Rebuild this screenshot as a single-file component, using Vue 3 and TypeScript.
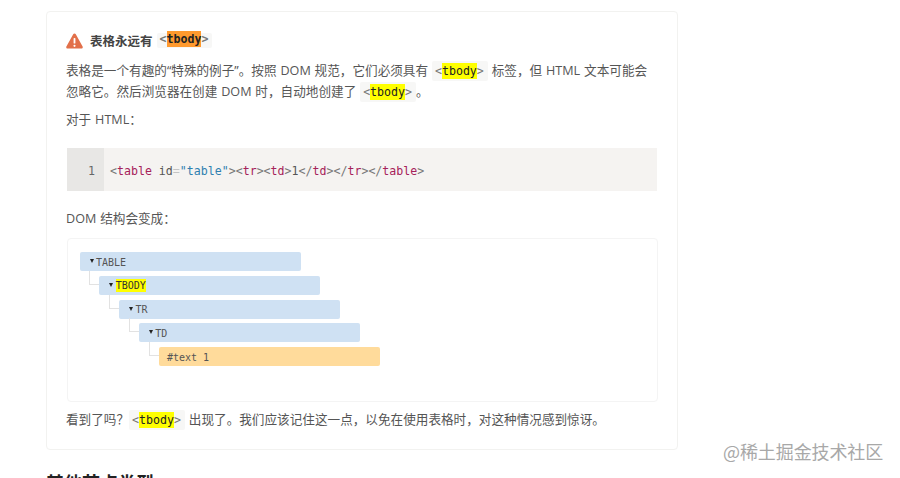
<script setup lang="ts">
interface TreeNode { label: string; depth: number; arrow: boolean; mark?: boolean; text?: boolean }
interface Token { t: string; c: string }
const nodes: TreeNode[] = [
  { label: 'TABLE', depth: 0, arrow: true },
  { label: 'TBODY', depth: 1, arrow: true, mark: true },
  { label: 'TR', depth: 2, arrow: true },
  { label: 'TD', depth: 3, arrow: true },
  { label: '#text 1', depth: 4, arrow: false, text: true },
]
const tokens: Token[] = [
  { t: '<', c: 'p' }, { t: 'table', c: 'k' }, { t: ' id', c: 'a' }, { t: '=', c: 'e' }, { t: '"table"', c: 's' },
  { t: '><', c: 'p' }, { t: 'tr', c: 'k' }, { t: '><', c: 'p' }, { t: 'td', c: 'k' }, { t: '>', c: 'p' },
  { t: '1', c: 'a' }, { t: '</', c: 'p' }, { t: 'td', c: 'k' }, { t: '></', c: 'p' }, { t: 'tr', c: 'k' },
  { t: '></', c: 'p' }, { t: 'table', c: 'k' }, { t: '>', c: 'p' },
]
</script>

<template>
  <div class="page">
    <section class="card">
      <h4 class="title">
        <svg class="warn" width="17" height="16" viewBox="0 0 17 16" aria-hidden="true">
          <path d="M8.5 0.4c.6 0 1 .3 1.3.8l6.8 12.4c.5 1-.1 2-1.2 2H1.6c-1.1 0-1.7-1-1.2-2L7.2 1.2c.3-.5.7-.8 1.3-.8z" fill="#e2704a"/>
          <rect x="7.6" y="5" width="1.8" height="5.6" rx=".7" fill="#fff"/>
          <circle cx="8.5" cy="12.8" r="1.1" fill="#fff"/>
        </svg>
        <span>表格永远有</span>
        <code class="pill head">&lt;<mark class="orange">tbody</mark>&gt;</code>
      </h4>
      <p class="para first">表格是一个有趣的“特殊的例子”。按照 DOM 规范，它们必须具有 <code class="pill">&lt;<mark>tbody</mark>&gt;</code> 标签，但 HTML 文本可能会忽略它。然后浏览器在创建 DOM 时，自动地创建了 <code class="pill">&lt;<mark>tbody</mark>&gt;</code>。</p>
      <p class="para">对于 HTML：</p>
      <div class="code">
        <div class="gutter">1</div>
        <div class="src"><span v-for="(tk, i) in tokens" :key="i" :class="tk.c">{{ tk.t }}</span></div>
      </div>
      <p class="para dom">DOM 结构会变成：</p>
      <div class="tree">
        <div
          v-for="n in nodes"
          :key="n.label"
          class="node"
          :class="{ text: n.text, child: n.depth > 0 }"
          :style="{ marginLeft: n.depth * 19.75 + 'px' }"
        >
          <i v-if="n.arrow" class="arrow"></i>
          <mark v-if="n.mark" class="nodemark">{{ n.label }}</mark>
          <span v-else>{{ n.label }}</span>
        </div>
      </div>
      <p class="para last">看到了吗？<code class="pill">&lt;<mark>tbody</mark>&gt;</code> 出现了。我们应该记住这一点，以免在使用表格时，对这种情况感到惊讶。</p>
    </section>
    <h3 class="next">其他节点类型</h3>
    <div class="watermark">@稀土掘金技术社区</div>
  </div>
</template>

<style>
html, body { margin: 0; background: #fff; overflow: hidden; }
</style>

<style scoped>
.page {
  position: relative;
  width: 900px;
  height: 478px;
  overflow: hidden;
  box-sizing: border-box;
  padding: 11px 0 0 46px;
  font-family: "Open Sans", "Noto Sans CJK SC", sans-serif;
  font-size: 12.62px;
  word-spacing: .6px;
  color: #555;
}
.card {
  box-sizing: border-box;
  width: 632px;
  height: 439px;
  border: 1px solid #f2f2f0;
  border-radius: 4px;
  padding: 18px 20px 0;
}
.title {
  display: flex;
  align-items: center;
  height: 21px;
  margin: 0 0 0 -1px;
  font-size: 12.5px;
  font-weight: 700;
  color: #444;
}
.warn { margin-right: 7px; }
.pill {
  font-family: "DejaVu Sans Mono", monospace;
  font-size: 11.6px;
  line-height: 1;
  background: #f7f7f6;
  border-radius: 2px;
  padding: 3px 4px 3px 3px;
  color: #777;
}
.head { margin-left: 4px; padding: 1px 4px 2px 3px; }
.head mark { font-weight: 700; }
mark { background: #ffff00; color: #222; padding: 1px 0; }
mark.orange { background: #ff9a2e; color: #222; }
.para { margin: 0 0 0 -1px; line-height: 21px; }
.para.first { margin-top: 9px; }
.para + .para { margin-top: 7px; }
.code {
  display: flex;
  height: 43px;
  margin-top: 18px;
  background: #f5f3f1;
  font-family: "DejaVu Sans Mono", monospace;
  font-size: 11.6px;
  line-height: 44px;
}
.gutter {
  box-sizing: border-box;
  width: 37px;
  padding: 1px 9px 0 0;
  text-align: right;
  background: #e8e7e5;
  color: #666;
}
.src { padding: 1px 0 0 6px; white-space: pre; word-spacing: 0; }
.p { color: #777; }
.k { color: #a6215a; }
.a { color: #555; }
.e { color: #c4c4c4; }
.s { color: #2f7fb0; }
.para.dom { margin-top: 17px; }
.tree {
  box-sizing: border-box;
  width: 591px;
  height: 164px;
  margin-top: 9px;
  padding: 13px 11.5px 0;
  border: 1px solid #f4f4f4;
  border-radius: 4px;
  display: flex;
  flex-direction: column;
  gap: 4.75px;
}
.node {
  position: relative;
  box-sizing: border-box;
  display: flex;
  align-items: center;
  width: 221px;
  height: 19px;
  padding: 1px 0 0 10px;
  background: #cfe1f3;
  border-radius: 2px;
  font-family: "DejaVu Sans Mono", monospace;
  font-size: 10px;
  color: #555;
  word-spacing: 0;
}
.node.child::before {
  content: "";
  position: absolute;
  left: -10px;
  top: -5px;
  width: 10px;
  height: 14px;
  border-left: 1.5px solid #e2e2e2;
  border-bottom: 1.5px solid #e2e2e2;
  box-sizing: border-box;
}
.node.text { background: #ffdb9b; padding-left: 8.5px; color: #555; }
.arrow {
  width: 0;
  height: 0;
  margin-right: 2.5px;
  border-left: 2.7px solid transparent;
  border-right: 2.7px solid transparent;
  border-top: 4.5px solid #222;
  transform: translateY(-1px);
}
.nodemark { background: #ffff00; color: #333; padding: 1px 0; }
.para.last { margin-top: 7px; }
.next {
  margin: 21px 0 0;
  font-size: 18px;
  font-weight: 700;
  line-height: 24px;
  color: #222;
}
.watermark {
  position: absolute;
  left: 723px;
  top: 440px;
  font-family: "Noto Sans CJK SC", sans-serif;
  font-size: 18px;
  line-height: 23px;
  color: #a8a8a8;
  letter-spacing: -.1px;
  word-spacing: 0;
}
</style>
